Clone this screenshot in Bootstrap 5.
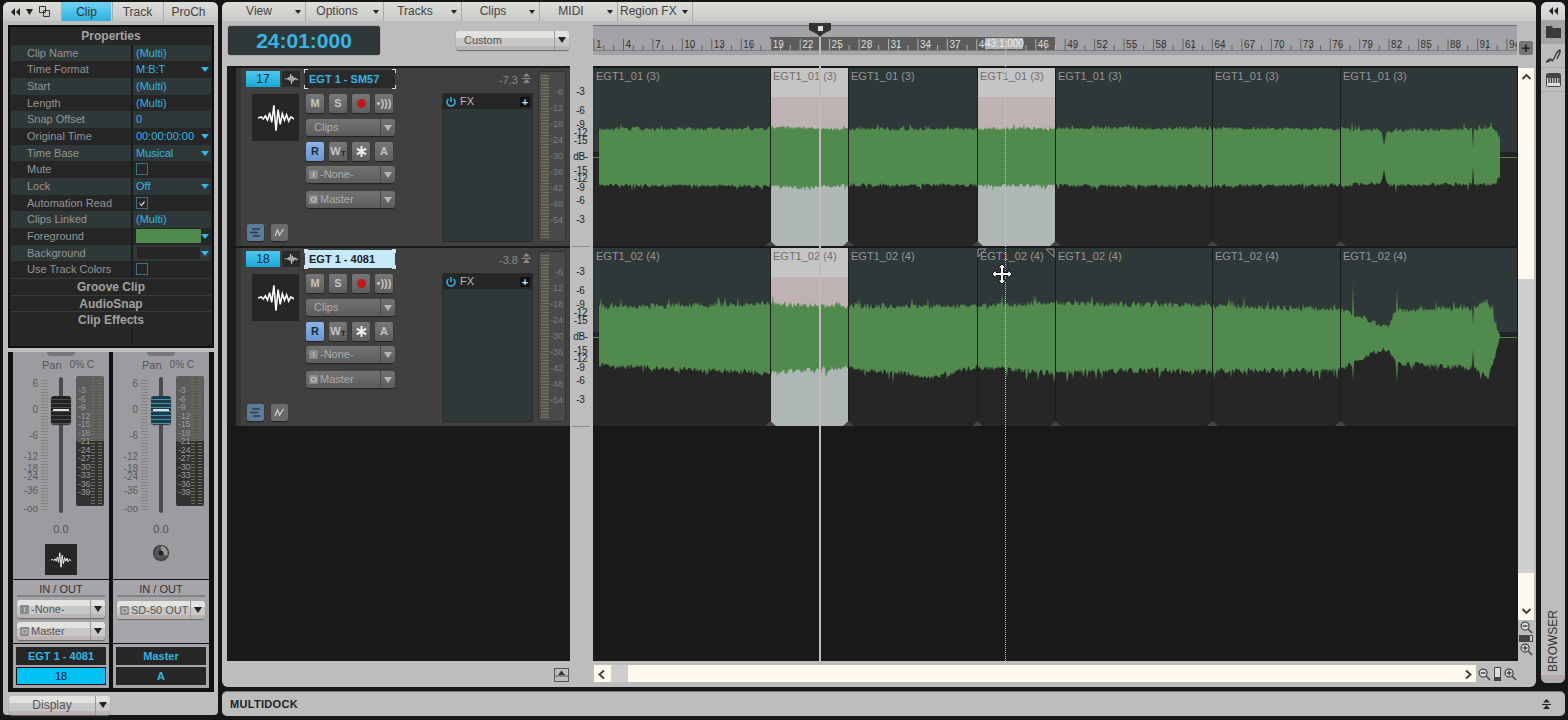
<!DOCTYPE html>
<html lang="en">

<head>
    <meta charset="UTF-8">
    <title>Track view</title>
    <link href="https://cdn.jsdelivr.net/npm/bootstrap@5.3.2/dist/css/bootstrap.min.css" rel="stylesheet">
    <style>
        html, body { height: 720px; overflow: hidden; background: #161616; }
        body, .btn { font-family: "Liberation Sans", Arial, sans-serif; font-size: 11px; }
        .app { height: 720px; padding: 2px 3px 3px; gap: 4px; }

        /* left inspector */
        .left-panel { width: 215px; height: 713px; background: #bdbdbd; border-radius: 6px 6px 4px 4px; flex: none; }
        .tabs-row { height: 19px; background: linear-gradient(#dededa, #c8c8c6); border-radius: 6px 6px 0 0; padding-left: 8px; }
        .tab-icons { width: 50px; gap: 6px; }
        .nav-link.tab { width: 50px; height: 19px; padding: 0; margin-right: 1px; line-height: 20px; text-align: center; color: #444; font-size: 12px; border-left: 1px solid #aaa; }
        .nav-link.tab.active { background: linear-gradient(#6fd3f3, #2fb1e0); color: #333; }
        .inspector { margin: 4px 4px 0 5px; height: 323px; border: 2px solid #0f0f0f; padding: 1px; background: #262626; color: #949494; }
        .prop-head { height: 16.67px; line-height: 17px; text-align: center; font-weight: 700; font-size: 12px; color: #a2a2a2; }
        .prop-head.sep { border-top: 1px solid #3a3a3a; }
        .prop-row { height: 16.67px; line-height: 16px; }
        .prop-row:nth-of-type(even) { background: #2f3838; }
        .prop-label { width: 122px; padding-left: 16px; border-right: 2px solid #1b1b1b; flex: none; }
        .prop-value { padding-left: 3px; color: #35b5e5; flex-grow: 1; position: relative; }
        .prop-caret { position: absolute; right: 2px; top: 6px; border: 4px solid transparent; border-top: 5px solid #35b5e5; border-bottom: 0; }
        .check { display: block; margin-top: 2px; width: 12px; height: 12px; border: 1px solid #3b7186; }
        .swatch { display: block; margin-top: 1px; width: 65px; height: 14px; }
        .swatch.fg { background: #508a4d; }
        .swatch.bg-sw { background: #262626; border: 1px solid #383838; }

        /* mixer strips */
        .mixer { margin: 4px 4px 0 5px; height: 340px; background: #111; padding: 0 5px 4px; gap: 4px; }
        .strip { width: 96px; background: #111; gap: 2px; }
        .strip-top { height: 227px; background: #9c9ca0; position: relative; }
        .knob-end { width: 28px; height: 4px; margin: 0 auto; border-radius: 0 0 14px 14px; background: #77777a; }
        .pan-row { height: 14px; margin-top: 2px; padding-left: 29px; gap: 8px; color: #555; line-height: 14px; }
        .pan-row span + span { font-size: 10px; }
        .fader-row { height: 137px; margin-top: 4px; }
        .scale-col { width: 36px; position: relative; flex: none; }
        .scale-label { position: absolute; right: 11px; transform: translateY(-50%); color: #5a5a5a; font-size: 10px; line-height: 8px; }
        .scale-ticks { position: absolute; right: 1px; top: 4px; bottom: 1px; width: 7px; background: repeating-linear-gradient(#84847c 0 1px, transparent 1px 3px); }
        .fader-slot { width: 27px; position: relative; flex: none; }
        .fader-line { position: absolute; left: 10px; width: 4px; top: 1px; bottom: 0; background: #4a4a4a; border-radius: 2px; }
        .fader-cap { position: absolute; left: 2px; top: 20px; width: 20px; height: 28px; border-radius: 3px; background: repeating-linear-gradient(#222 0 3px, #4c4c4c 3px 4px); box-shadow: 0 1px 1px #333; }
        .fader-cap.blue { background: repeating-linear-gradient(#1d3a47 0 3px, #4b93ad 3px 4px); }
        .fader-cap::after { content: ""; position: absolute; left: 2px; right: 2px; top: 13px; height: 2px; background: #ddd; }
        .strip-meter { width: 28px; height: 130px; background: linear-gradient(#5c5c5c 50%, #323232 50%); border-radius: 2px; position: relative; padding-top: 10px; flex: none; }
        .meter-label { height: 8.5px; line-height: 8.5px; font-size: 9px; padding-left: 2px; color: #9a9a9a; letter-spacing: -.3px; }
        .meter-col { position: absolute; top: 1px; bottom: 1px; width: 4px; background: repeating-linear-gradient(#6f6f5c 0 1px, transparent 1px 3px); }
        .meter-col.c1 { left: 15px; }
        .meter-col.c2 { left: 22px; }
        .db-val { margin-top: 9px; padding-left: 0; width: 96px; color: #4f4f4f; font-size: 11px; line-height: 14px; text-align: center; }
        .strip-icon { height: 31px; margin-top: 8px; }
        .wave-tile { background: #262626; }
        .io-box { height: 63px; background: #a6a6aa; padding: 0 4px; margin-top: -1px; color: #333; }
        .io-title { height: 17px; line-height: 18px; text-align: center; font-size: 11px; border-bottom: 2px solid #838383; margin: 0 0 3px; }
        .name-box { height: 44px; background: #a6a6aa; padding: 3px 3px 0; gap: 2px; margin-top: -1px; }
        .name-cell { height: 18px; line-height: 18px; text-align: center; background: #262626; color: #35b5e5; font-weight: 700; }
        .name-cell.num { background: #00c2f5; color: #111; font-weight: 400; border: 1px solid #111; line-height: 16px; }
        .name-cell.letter { font-weight: 700; }

        /* combos */
        .combo { height: 18px; line-height: 18px; border-radius: 3px; background: linear-gradient(#e2e2de 0 35%, #c8c8c8 35% 80%, #bdb4b4 80%); color: #555; box-shadow: 0 1px 1px #666; font-size: 11px; }
        .combo + .combo { margin-top: 4px; }
        .combo-io { width: 9px; height: 9px; margin: 0 2px 0 3px; flex: none; background: #8b8b8b; color: #ddd; font-size: 8px; line-height: 9px; text-align: center; border-radius: 1px; align-self: center; }
        .combo-text { flex-grow: 1; overflow: hidden; white-space: nowrap; }
        .combo-arrow { width: 15px; flex: none; border-left: 1px solid #999; position: relative; }
        .combo-arrow::after { content: ""; position: absolute; left: 3px; top: 6px; border: 4px solid transparent; border-top: 6px solid #222; border-bottom: 0; }
        .combo.dark { height: 17px; line-height: 17px; background: linear-gradient(#737373, #5c5c5c); color: #adadad; box-shadow: 0 1px 1px #222; }
        .combo.dark .combo-arrow { border-left-color: #4a4a4a; }
        .combo.dark .combo-arrow::after { border-top-color: #b5b5b5; }

        .display-row { margin: 4px 0 0 6px; width: 101px; }
        .display-row .combo { height: 19px; line-height: 19px; font-size: 12px; }

        /* main panel */
        .main-col { width: 1343px; gap: 4px; flex: none; }
        .center-panel { width: 1314px; height: 685px; background: #bdbdbd; border-radius: 6px; position: relative; flex: none; overflow: hidden; }
        .toolbar { height: 19px; padding-left: 6px; background: linear-gradient(#dededa, #c9c9c5); }
        .tool-item { width: 78px; line-height: 19px; font-size: 12px; color: #444; border-right: 1px solid #aaa; position: relative; }
        .tool-item span { display: block; width: 62px; text-align: center; }
        .tool-item::after { content: ""; position: absolute; right: 4px; top: 8px; border: 3px solid transparent; border-top: 4px solid #222; border-bottom: 0; }
        .tool-item.last { width: 75px; }
        .tool-item.last span { width: auto; padding-left: 2px; text-align: left; }
        .head-row { height: 45px; flex: none; }
        .clock { margin: 5px 0 0 6px; width: 152px; height: 29px; background: #2f3838; border-radius: 3px; color: #35b5e5; font-size: 21px; font-weight: 700; line-height: 29px; text-align: center; box-shadow: 0 0 1px #111; }
        .custom-combo { margin: 10px 0 0 76px; width: 113px; height: 19px; }
        .ruler { margin: 4px 0 0 24px; width: 924px; height: 30px; background: #a3a3a7; border-top: 1px solid #6f6f6f; }
        .zoom-plus { width: 14px; height: 14px; margin: 20px 0 0 2px; background: #757575; color: #222; border-radius: 2px; font-weight: 700; font-size: 15px; line-height: 13px; text-align: center; }
        .track-area { height: 595px; margin: 0 2px 0 5px; background: #191919; flex: none; }
        .track-col { width: 343px; padding-top: 2px; gap: 2px; flex: none; }
        .track-head { height: 178px; background: #404040; color: #a8a8a8; position: relative; border-left: 9px solid #1c1c1c; flex: none; }
        .track-a { width: 64px; flex: none; padding: 3px 0 5px 5px; border-left: 5px solid #313838; }
        .num-btn { width: 34px; height: 16px; line-height: 16px; text-align: center; background: linear-gradient(#4ccaf0, #17a8d6); color: #123; font-size: 12px; }
        .mini-wave { width: 18px; height: 16px; margin-left: 2px; background: #2a2a2a; }
        .big-icon { width: 47px; height: 47px; margin: 7px 0 0 6px; background: #262626; }
        .foot-row-btns { margin-left: 1px; gap: 7px; }
        .foot-btn { width: 17px; height: 17px; background: #6b6b6b; border-radius: 2px; box-shadow: 0 1px 1px #222; }
        .foot-btn.blue { background: #5d7c99; }
        .track-b { width: 90px; flex: none; margin-left: 5px; padding-top: 2px; }
        .name-field { height: 18px; line-height: 18px; padding-left: 4px; background: #2a2a2a; color: #35b5e5; font-weight: 700; font-size: 11px; position: relative; }
        .name-field::before { content: ""; position: absolute; inset: -1px; background:
            linear-gradient(#ddd, #ddd) left top / 4px 1px, linear-gradient(#ddd, #ddd) left top / 1px 4px,
            linear-gradient(#ddd, #ddd) right top / 4px 1px, linear-gradient(#ddd, #ddd) right top / 1px 4px,
            linear-gradient(#ddd, #ddd) left bottom / 4px 1px, linear-gradient(#ddd, #ddd) left bottom / 1px 4px,
            linear-gradient(#ddd, #ddd) right bottom / 4px 1px, linear-gradient(#ddd, #ddd) right bottom / 1px 4px;
            background-repeat: no-repeat; }
        .name-field.on { background: #c6eafa; color: #222; }
        .btn-row { margin: 6px 0 0 1px; gap: 5px; }
        .btn.tb { width: 18px; height: 19px; padding: 0; line-height: 19px; border: 0; border-radius: 2px; background: linear-gradient(#777, #5f5f5f); color: #c4c4c4; font-weight: 700; font-size: 11px; box-shadow: 0 1px 1px #222; display: flex; align-items: center; justify-content: center; }
        .btn.tb.read { background: linear-gradient(#8db4e6, #6b96d0); color: #1c2a3c; }
        .btn.tb sub { font-size: 8px; bottom: -.3em; color: #222; }
        .rec { width: 9px; height: 9px; border-radius: 50%; background: #c0181c; }
        .track-b .combo { margin-left: 1px; }
        .slot-clips { margin: 6px 0 1px; }
        .slot-none { margin-top: 5px; }
        .slot-master { margin-top: 8px; }
        .track-c { width: 91px; margin-left: 47px; flex: none; padding-top: 5px; }
        .peak { height: 20px; color: #8a8a8a; font-size: 11px; line-height: 14px; gap: 4px; padding-right: 2px; }
        .fx-box { height: 149px; margin-top: 0; background: #2f3838; border: 1px solid #2a2a2a; border-radius: 2px; }
        .fx-head { height: 15px; background: #262626; color: #b8b8b8; line-height: 15px; gap: 4px; padding-left: 3px; font-size: 11px; }
        .fx-plus { width: 10px; height: 10px; margin-right: 2px; background: #111; color: #ddd; font-size: 11px; font-weight: 700; line-height: 10px; text-align: center; }
        .track-d { width: 28px; height: 171px; margin: 3px 0 0 5px; border-radius: 3px; background: #4a4a4a; border: 1px solid #333; position: relative; padding-top: 12px; flex: none; }
        .track-d::before { content: ""; position: absolute; left: 2px; top: 3px; bottom: 3px; width: 8px; background: repeating-linear-gradient(#75755e 0 1px, #55554c 1px 3px); }
        .head-label { height: 16px; line-height: 16px; padding-right: 2px; text-align: right; font-size: 9px; color: #7c7c7c; }
        .db-col { width: 23px; background: #bdbdbd; position: relative; flex: none; }
        .db-label { position: absolute; left: 0; right: 2px; transform: translateY(-50%); text-align: center; font-size: 10px; line-height: 10px; color: #222; letter-spacing: -.3px; }
        .db-sep { position: absolute; left: 2px; right: 3px; height: 1px; background: #8f8a86; }
        .lanes { width: 924px; padding-top: 2px; gap: 2px; flex: none; }
        .lane { height: 178px; position: relative; flex: none; }
        .clip { background: linear-gradient(#2f3838 0 50%, #262626 50%); color: #969696; padding: 2px 0 0 3px; line-height: 12px; font-size: 11px; overflow: hidden; white-space: nowrap; }
        .clip.sel { background: linear-gradient(#c6c5c5 0 29px, #bfb2b2 29px 50%, #aeb6b6 50%); color: #6e6e6e; }
        .lane svg { position: absolute; left: 0; top: 0; }
        .vscroll { width: 16px; margin-left: 1px; background: #bdbdbd; flex: none; padding-top: 2px; }
        .scroll-track { background: #fff9ef; flex-grow: 1; position: relative; }
        .v-thumb { position: absolute; left: 0; right: 0; top: 211px; height: 294px; background: #cfcfcf; }
        .scroll-arrow { position: absolute; left: 0; right: 0; text-align: center; line-height: 0; }
        .v-zoom { height: 41px; padding-top: 1px; gap: 1px; flex: none; }
        .foot-row { height: 26px; flex: none; }
        .fold-btn { margin: 7px 0 0 332px; flex: none; }
        .h-scroll { width: 882px; height: 17px; margin: 4px 0 0 25px; background: #fff9ef; position: relative; flex: none; }
        .h-thumb { position: absolute; left: 17px; top: 0; bottom: 0; width: 17px; background: #cfcfcf; }
        .h-zoom { margin-left: 2px; gap: 3px; }
        .overlay-line { position: absolute; top: 34px; height: 625px; width: 1px; }
        .playhead { left: 597px; background: #bdbdbd; width: 2px; }
        .edit-line { left: 783px; background: repeating-linear-gradient(#c8c8c8 0 1px, transparent 1px 2px); }
        .play-handle { position: absolute; left: 586px; top: 21px; width: 24px; height: 14px; }
        .tip { position: absolute; left: 763px; top: 36px; width: 38px; height: 11px; background: #b4b4b4; color: #eee; font-size: 10px; line-height: 11px; text-align: center; white-space: nowrap; }
        .move-cursor { position: absolute; left: 769px; top: 261px; }

        /* right strip + multidock */
        .side-strip { width: 24px; height: 681px; background: #bdbdbd; border-radius: 6px; overflow: hidden; flex: none; }
        .side-top { height: 18px; background: linear-gradient(#e0e0dc, #cfcfcb); }
        .side-btn { height: 24px; border-bottom: 1px solid #aaa; }
        .side-btn.on { background: #a4a4a4; }
        .browser-tab { height: 76px; padding-bottom: 11px; background: linear-gradient(#bdbdbd 90%, #b3aaaa 90%); }
        .browser-tab span { writing-mode: vertical-rl; transform: rotate(180deg); font-size: 12px; color: #333; }
        .multidock { height: 25px; background: #bdbdbd; border-radius: 5px; padding: 0 14px 0 8px; color: #222; font-weight: 700; letter-spacing: .3px; border-top: 1px solid #777; }
    </style>
</head>

<body>
    <svg width="0" height="0" class="position-absolute">
        <symbol id="wave" viewBox="0 0 34 30">
            <polyline fill="none" stroke="#fff" stroke-width="1.5" points="0,15 3,14 5,16 7,13 9,17 11,10 13,19 15,3 17,27 19,7 21,21 23,11 25,17 27,12 29,18 31,14 34,16" />
        </symbol>
        <symbol id="mag-minus" viewBox="0 0 14 14">
            <circle cx="5.5" cy="5.5" r="4.3" fill="#ddd" stroke="#444" stroke-width="1.3" />
            <path d="M3 5.5h5M8.7 8.7 13 13" stroke="#444" stroke-width="1.6" />
        </symbol>
        <symbol id="mag-plus" viewBox="0 0 14 14">
            <circle cx="5.5" cy="5.5" r="4.3" fill="#ddd" stroke="#444" stroke-width="1.3" />
            <path d="M3 5.5h5M5.5 3v5M8.7 8.7 13 13" stroke="#444" stroke-width="1.6" />
        </symbol>
        <symbol id="dbl-up" viewBox="0 0 9 10">
            <path d="M4.5 0 8 3.5H1zM0 5h9v1H0zM4.5 6 8 10H1z" fill="currentColor" />
        </symbol>
    </svg>

    <div class="app d-flex">
        <!-- Inspector -->
        <aside class="left-panel d-flex flex-column">
            <div class="tabs-row d-flex align-items-center">
                <div class="tab-icons d-flex align-items-center">
                    <svg width="9" height="8"><path d="M4 0v8L0 4zM9 0v8L5 4z" fill="#222" /></svg>
                    <svg width="7" height="6"><path d="M0 0h7L3.5 6z" fill="#222" /></svg>
                    <svg width="11" height="11"><path d="M.5.5h6v6h-6zM4.5 4.5h6v6h-6z" fill="none" stroke="#333" /></svg>
                </div>
                <ul class="nav flex-nowrap">
                    <li class="nav-item"><a class="nav-link tab active" href="#">Clip</a></li>
                    <li class="nav-item"><a class="nav-link tab" href="#">Track</a></li>
                    <li class="nav-item"><a class="nav-link tab" href="#">ProCh</a></li>
                </ul>
            </div>
            <div class="inspector" id="inspector"></div>
            <div class="mixer d-flex" id="mixer"></div>
            <div class="display-row d-flex">
                <div class="combo d-flex flex-grow-1">
                    <span class="combo-text text-center">Display</span><span class="combo-arrow"></span>
                </div>
            </div>
        </aside>

        <div class="main-col d-flex flex-column">
            <div class="d-flex justify-content-between">
                <!-- Track view -->
                <main class="center-panel d-flex flex-column">
                    <div class="toolbar d-flex flex-none">
                        <div class="tool-item"><span>View</span></div>
                        <div class="tool-item"><span>Options</span></div>
                        <div class="tool-item"><span>Tracks</span></div>
                        <div class="tool-item"><span>Clips</span></div>
                        <div class="tool-item"><span>MIDI</span></div>
                        <div class="tool-item last"><span>Region FX</span></div>
                    </div>
                    <div class="head-row d-flex">
                        <div class="clock">24:01:000</div>
                        <div class="combo custom-combo d-flex">
                            <span class="combo-text ps-2">Custom</span><span class="combo-arrow"></span>
                        </div>
                        <div class="ruler" id="ruler"></div>
                        <div class="zoom-plus">+</div>
                    </div>
                    <div class="track-area d-flex">
                        <div class="track-col d-flex flex-column" id="tracks"></div>
                        <div class="db-col" id="dbCol"></div>
                        <div class="lanes d-flex flex-column" id="lanes"></div>
                        <div class="vscroll d-flex flex-column">
                            <div class="scroll-track">
                                <div class="v-thumb"></div>
                                <div class="scroll-arrow" style="top:6px"><svg width="9" height="6"><path d="M.5 5 4.5 1l4 4" fill="none" stroke="#444" stroke-width="2" /></svg></div>
                                <div class="scroll-arrow" style="bottom:6px"><svg width="9" height="6"><path d="M.5 1l4 4 4-4" fill="none" stroke="#444" stroke-width="2" /></svg></div>
                            </div>
                            <div class="v-zoom d-flex flex-column align-items-center">
                                <svg width="13" height="13"><use href="#mag-minus" /></svg>
                                <svg width="14" height="7"><path d="M0 0h10v7H0z" fill="#444" /><path d="M10.500.5h3v6h-3z" fill="#ccc" stroke="#444" /></svg>
                                <svg width="13" height="13"><use href="#mag-plus" /></svg>
                            </div>
                        </div>
                    </div>
                    <div class="foot-row d-flex">
                        <svg class="fold-btn" width="15" height="14"><rect x=".5" y=".5" width="14" height="13" fill="#bdbdbd" stroke="#555" /><path d="M1 8h13" stroke="#555" /><path d="M7.500 2.500 11 7H4z" fill="#333" /></svg>
                        <div class="h-scroll">
                            <div class="h-thumb"></div>
                            <svg class="position-absolute" style="left:4px;top:5px" width="7" height="9"><path d="M6 .5 1.500 4.500l4.500 4" fill="none" stroke="#444" stroke-width="2" /></svg>
                            <svg class="position-absolute" style="right:4px;top:5px" width="7" height="9"><path d="M1 .5l4.500 4-4.500 4" fill="none" stroke="#444" stroke-width="2" /></svg>
                        </div>
                        <div class="h-zoom d-flex align-items-center">
                            <svg width="13" height="13"><use href="#mag-minus" /></svg>
                            <svg width="7" height="14"><path d="M.5.5h6v10h-6z" fill="#ddd" stroke="#444" /><path d="M0 10h7v4H0z" fill="#444" /></svg>
                            <svg width="13" height="13"><use href="#mag-plus" /></svg>
                        </div>
                    </div>
                    <!-- timeline markers lying over ruler and clips -->
                    <div class="overlay-line edit-line"></div>
                    <div class="overlay-line playhead"></div>
                    <svg class="play-handle" viewBox="0 0 24 14"><path d="M1 0h22v7l-8 4-3 3-3-3-8-4z" fill="#333" /><rect x="10" y="3" width="5" height="5" fill="#ddd" /></svg>
                    <div class="tip">43:1:000</div>
                    <svg class="move-cursor" width="22" height="22" viewBox="0 0 22 22">
                        <path d="M11 1l4 4h-2.500v4.500H17V7l4 4-4 4v-2.500h-4.500V17H15l-4 4-4-4h2.500v-4.500H5V15l-4-4 4-4v2.500h4.500V5H7z" fill="#fff" stroke="#111" stroke-width="1" />
                    </svg>
                </main>

                <!-- Browser strip -->
                <nav class="side-strip d-flex flex-column">
                    <div class="side-top d-flex align-items-center justify-content-center">
                        <svg width="9" height="8"><path d="M4 0v8L0 4zM9 0v8L5 4z" fill="#222" /></svg>
                    </div>
                    <div class="side-btn on d-flex align-items-center justify-content-center">
                        <svg width="15" height="13"><path d="M0 1h6l1 2h8v10H0z" fill="#3a3a3a" /></svg>
                    </div>
                    <div class="side-btn d-flex align-items-center justify-content-center">
                        <svg width="17" height="16"><path d="M1 14c2-1 3-4 5-3s0 3 2 1 3-9 7-10c1 3-2 6-3 9" fill="none" stroke="#333" stroke-width="1.300" /><path d="M1 15l3-4 2 2z" fill="#333" /></svg>
                    </div>
                    <div class="side-btn d-flex align-items-center justify-content-center">
                        <svg width="15" height="14"><rect x=".5" y=".5" width="14" height="13" rx="1" fill="#ddd" stroke="#444" /><path d="M1 1h13v4H1z" fill="#444" /><path d="M3 5v5M5.500 5v5M8 5v5M10.500 5v5M13 5v5" stroke="#333" stroke-width="1.300" /></svg>
                    </div>
                    <div class="browser-tab mt-auto d-flex justify-content-center align-items-end"><span>BROWSER</span></div>
                </nav>
            </div>
            <footer class="multidock d-flex align-items-center justify-content-between">
                <span>MULTIDOCK</span>
                <svg width="9" height="10" class="text-dark"><use href="#dbl-up" /></svg>
            </footer>
        </div>
    </div>

    <script>
        const props = [
            ['Clip Name', '(Multi)'], ['Time Format', 'M:B:T', 1], ['Start', '(Multi)'], ['Length', '(Multi)'],
            ['Snap Offset', '0'], ['Original Time', '00:00:00:00', 1], ['Time Base', 'Musical', 1],
            ['Mute', '<span class="check"></span>'], ['Lock', 'Off', 1],
            ['Automation Read', '<svg class="check" viewBox="0 0 12 12"><path d="M3 5l2 3 4-5v3L5 10 3 7z" fill="#ddd"/></svg>'],
            ['Clips Linked', '(Multi)'], ['Foreground', '<span class="swatch fg"></span>', 1],
            ['Background', '<span class="swatch bg-sw"></span>', 1], ['Use Track Colors', '<span class="check"></span>']
        ];

        // Inspector rows
        let inspectorHtml = '<div class="prop-head">Properties</div>';
        props.forEach(p => {
            inspectorHtml += `<div class="prop-row d-flex"><div class="prop-label">${p[0]}</div><div class="prop-value">${p[1]}${p[2] ? '<i class="prop-caret"></i>' : ''}</div></div>`;
        });
        ['Groove Clip', 'AudioSnap', 'Clip Effects'].forEach(h => {
            inspectorHtml += `<div class="prop-head sep">${h}</div>`;
        });
        inspectorHtml += '<div class="prop-row d-flex"><div class="prop-label"></div></div>';
        document.getElementById('inspector').innerHTML = inspectorHtml;

        function combo(text, io, dark) {
            const ioBox = io ? `<span class="combo-io">${io}</span>` : '<span class="ps-2"></span>';
            return `<div class="combo ${dark ? 'dark' : ''} d-flex">${ioBox}<span class="combo-text">${text}</span><span class="combo-arrow"></span></div>`;
        }

        // Mixer strips
        const faderScale = [['6', 8], ['0', 34], ['-6', 60], ['-12', 81], ['-18', 93], ['-24', 101], ['-36', 115], ['-oo', 133]];
        const meterMarks = [-3, -6, -9, -12, -15, -18, -21, -24, -27, -30, -33, -36, -39];
        const strips = [
            { cap: '', icon: '<div class="wave-tile d-flex align-items-center justify-content-center" style="width:32px;height:31px"><svg width="24" height="18"><use href="#wave"/></svg></div>', io: combo('-None-', 'I') + combo('Master', 'O'), title: 'EGT 1 - 4081', foot: '<div class="name-cell num">18</div>' },
            { cap: 'blue', icon: '<svg width="18" height="18" viewBox="0 0 18 18"><circle cx="9" cy="9" r="8" fill="#333"/><circle cx="9" cy="9" r="7" fill="#555"/><path d="M9 2a7 7 0 0 1 6 10L9 9z" fill="#999"/><circle cx="9" cy="9" r="2.500" fill="#222"/></svg>', io: '<div class="mt-1">' + combo('SD-50 OUT', 'O') + '</div>', title: 'Master', foot: '<div class="name-cell letter">A</div>' }
        ];
        document.getElementById('mixer').innerHTML = strips.map(s => `
            <div class="strip d-flex flex-column">
                <div class="strip-top">
                    <div class="knob-end"></div>
                    <div class="pan-row d-flex"><span>Pan</span><span>0% C</span></div>
                    <div class="fader-row d-flex">
                        <div class="scale-col">
                            ${faderScale.map(m => `<span class="scale-label" style="top:${m[1]}px">${m[0]}</span>`).join('')}
                            <div class="scale-ticks"></div>
                        </div>
                        <div class="fader-slot"><div class="fader-line"></div><div class="fader-cap ${s.cap}"></div></div>
                        <div class="strip-meter"><i class="meter-col c1"></i><i class="meter-col c2"></i>${meterMarks.map(m => `<div class="meter-label">${m}</div>`).join('')}</div>
                    </div>
                    <div class="db-val">0.0</div>
                    <div class="strip-icon d-flex justify-content-center">${s.icon}</div>
                </div>
                <div class="io-box"><div class="io-title">IN / OUT</div>${s.io}</div>
                <div class="name-box d-flex flex-column"><div class="name-cell">${s.title}</div>${s.foot}</div>
            </div>`).join('');

        // Ruler
        const barWidth = 29.45;
        let rulerSvg = '<svg width="924" height="29"><rect x="177" y="11" width="285" height="13" fill="#5c5c5c"/><path d="M0 24.500h924" stroke="#7d7d7d"/>';
        for (let i = 0, bar = 1; bar <= 94; i++, bar += 3) {
            const x = 3 + i * barWidth;
            const inSel = x > 177 && x < 462;
            const tick = inSel ? '#c8c8c8' : '#555';
            rulerSvg += `<path d="M${(x - 2).toFixed(1)} 13v11M${(x + 7.8).toFixed(1)} 19v5M${(x + 17.6).toFixed(1)} 19v5" stroke="${tick}" stroke-width=".8"/>`;
            // bar 43 sits under the time tip
            if (bar !== 43) rulerSvg += `<text x="${x.toFixed(1)}" y="22" font-size="10" font-family="Liberation Sans" fill="${inSel ? '#ddd' : '#333'}">${bar}</text>`;
        }
        document.getElementById('ruler').innerHTML = rulerSvg + '</svg>';

        // Track headers
        const tracks = [
            { num: 17, name: 'EGT 1 - SM57', peak: '-7.3', sel: [1, 3], clip: 'EGT1_01 (3)', on: false },
            { num: 18, name: 'EGT 1 - 4081', peak: '-3.8', sel: [1], clip: 'EGT1_02 (4)', on: true }
        ];
        const headMarks = [-6, -12, -18, -24, -30, -36, -42, -48, -54];
        const powerIcon = '<svg width="10" height="11" viewBox="0 0 10 11"><path d="M2.500 3a4 4 0 1 0 5 0" fill="none" stroke="#35b5e5" stroke-width="1.500"/><path d="M5 1v5" stroke="#35b5e5" stroke-width="1.500"/></svg>';
        document.getElementById('tracks').innerHTML = tracks.map(t => `
            <div class="track-head d-flex">
                <div class="track-a d-flex flex-column">
                    <div class="d-flex">
                        <div class="num-btn">${t.num}</div>
                        <div class="mini-wave d-flex align-items-center justify-content-center"><svg width="15" height="12"><use href="#wave"/></svg></div>
                    </div>
                    <div class="big-icon d-flex align-items-center justify-content-center"><svg width="36" height="32"><use href="#wave"/></svg></div>
                    <div class="foot-row-btns d-flex mt-auto">
                        <div class="foot-btn blue d-flex align-items-center justify-content-center"><svg width="11" height="9"><path d="M2 1h8M0 4.500h8M3 8h7" stroke="#2b3a4a" stroke-width="1.600"/></svg></div>
                        <div class="foot-btn d-flex align-items-center justify-content-center"><svg width="11" height="9"><path d="M1 8 3.500 2l2 5 4-6" fill="none" stroke="#ccc" stroke-width="1.300"/></svg></div>
                    </div>
                </div>
                <div class="track-b">
                    <div class="name-field ${t.on ? 'on' : ''}">${t.name}</div>
                    <div class="btn-row d-flex">
                        <button class="btn tb">M</button><button class="btn tb">S</button>
                        <button class="btn tb"><span class="rec"></span></button><button class="btn tb">•)))</button>
                    </div>
                    <div class="slot-clips">${combo('Clips', '', true)}</div>
                    <div class="btn-row d-flex">
                        <button class="btn tb read">R</button><button class="btn tb">W<sub>T</sub></button>
                        <button class="btn tb"><svg width="13" height="13"><path d="M6.500 1v11M1.800 3.700l9.400 5.600M1.800 9.300l9.400-5.600" stroke="#eee" stroke-width="2"/></svg></button><button class="btn tb">A</button>
                    </div>
                    <div class="slot-none">${combo('-None-', 'I', true)}</div>
                    <div class="slot-master">${combo('Master', 'O', true)}</div>
                </div>
                <div class="track-c">
                    <div class="peak d-flex justify-content-end"><span>${t.peak}</span><svg width="9" height="10"><use href="#dbl-up"/></svg></div>
                    <div class="fx-box">
                        <div class="fx-head d-flex align-items-center">${powerIcon}<span>FX</span><span class="fx-plus ms-auto">+</span></div>
                    </div>
                </div>
                <div class="track-d">${headMarks.map(m => `<div class="head-label">${m}</div>`).join('')}</div>
            </div>`).join('');

        // dB scale between headers and clips
        const dbMarks = [['-3', 24], ['-6', 43], ['-9', 57], ['-12', 65], ['-15', 73], ['dB-', 89], ['-15', 103], ['-12', 111], ['-9', 120], ['-6', 133], ['-3', 152]];
        let dbHtml = '';
        [2, 182].forEach(top => {
            dbMarks.forEach(m => { dbHtml += `<span class="db-label" style="top:${top + m[1]}px">${m[0]}</span>`; });
            dbHtml += `<div class="db-sep" style="top:${top + 178}px"></div>`;
        });
        document.getElementById('dbCol').innerHTML = dbHtml;

        // Waveforms: piecewise envelope plus seeded noise
        let seed = 4711;
        function rnd() {
            seed = (seed * 16807) % 2147483647;
            return seed / 2147483647;
        }
        function envelope(points, x) {
            for (let i = 1; i < points.length; i++) {
                if (x <= points[i][0]) {
                    const [x0, y0] = points[i - 1], [x1, y1] = points[i];
                    return y0 + (y1 - y0) * (x - x0) / (x1 - x0);
                }
            }
            return points[points.length - 1][1];
        }
        const shapes = [
            {
                top: [[0, 30], [175, 30], [180, 32], [250, 30], [600, 31], [745, 30], [788, 29], [791, 15], [794, 28], [880, 30], [900, 31], [906, 22]],
                bot: [[0, 30], [175, 31], [215, 33], [250, 30], [600, 31], [745, 30], [788, 28], [791, 15], [794, 30], [880, 29], [900, 30], [906, 22]],
                noise: 4, spike: 5, spikes: [[759, 35, 30], [803, 30, 36], [880, 9, 9]]
            },
            {
                top: [[0, 33], [177, 36], [250, 34], [385, 34], [460, 37], [620, 34], [745, 31], [765, 24], [790, 14], [796, 14], [803, 30], [880, 32], [895, 40], [900, 24], [907, 4]],
                bot: [[0, 31], [177, 39], [250, 33], [340, 43], [385, 33], [460, 39], [560, 36], [620, 37], [745, 36], [770, 24], [790, 15], [796, 15], [803, 29], [880, 34], [895, 43], [900, 30], [907, 4]],
                noise: 6, spike: 9, spikes: [[760, 54, 44], [804, 47, 46], [880, 12, 12]]
            }
        ];
        const clipWidths = [177, 78, 129, 78, 157, 128, 177];
        function wavePath(shape, mid) {
            let upper = 'M6 ' + mid, lower = '';
            for (let x = 6; x <= 907; x++) {
                const sp = shape.spikes.find(s => s[0] === x);
                let a = envelope(shape.top, x) - rnd() * shape.noise;
                let b = envelope(shape.bot, x) - rnd() * shape.noise;
                if (rnd() < .07) a += rnd() * shape.spike;
                if (rnd() < .07) b += rnd() * shape.spike;
                if (sp) { a = sp[1]; b = sp[2]; }
                upper += `L${x} ${(mid - a).toFixed(1)}`;
                lower = `L${x} ${(mid + b).toFixed(1)}` + lower;
            }
            return upper + lower + 'Z';
        }
        document.getElementById('lanes').innerHTML = tracks.map((t, n) => {
            const mid = 89;
            let x = 0, marks = '';
            const clips = clipWidths.map((w, i) => {
                const sel = t.sel.includes(i);
                const html = `<div class="clip ${sel ? 'sel' : ''}" style="width:${w}px">${t.clip}</div>`;
                x += w;
                if (i < clipWidths.length - 1) {
                    marks += `<path d="M${x}.5 0V178" stroke="#1c1c1c"/><path d="M${x - 5} 178 ${x + 0.500} 173 ${x + 6} 178z" fill="#444"/>`;
                }
                return html;
            }).join('');
            const wave = `<path d="${wavePath(shapes[n], mid)}" fill="#508a4d"/>`;
            const ends = `<rect x="0" y="${mid - 5}" width="6" height="5" fill="#1f2424"/><rect x="907" y="${mid - 5}" width="17" height="5" fill="#1f2424"/><path d="M0 ${mid}.5h6M907 ${mid}.5h17" stroke="#508a4d"/>`;
            // fade handles on the clip under the cursor
            const handles = n === 1 ? '<path d="M385 1h8l-8 8zM461 1h-8l8 8z" fill="none" stroke="#9a9a9a"/>' : '';
            return `<div class="lane d-flex">${clips}<svg width="924" height="178">${ends}${wave}${marks}${handles}</svg></div>`;
        }).join('');
    </script>

    <script src="https://cdn.jsdelivr.net/npm/bootstrap@5.3.2/dist/js/bootstrap.bundle.min.js"></script>
</body>

</html>
